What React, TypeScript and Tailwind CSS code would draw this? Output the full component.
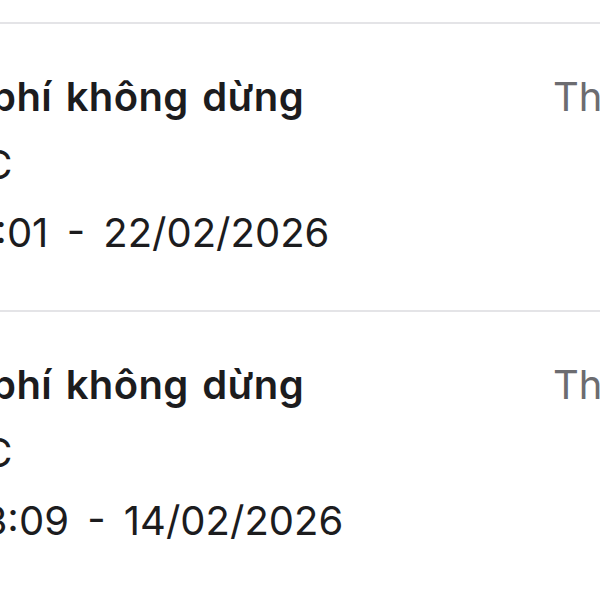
const ROWS = [
  { title: "Thu phí không dừng", sub: "VETC", time: "10:41:01 - 22/02/2026", status: "Thành công" },
  { title: "Thu phí không dừng", sub: "VETC", time: "07:23:09 - 14/02/2026", status: "Thành công" },
];

export default function App() {
  return (
    <div
      className="h-[600px] w-[600px] overflow-hidden bg-white pt-[22px]"
      style={{ fontFamily: "Inter, 'Noto Sans', sans-serif" }}
    >
      {ROWS.map((row, i) => (
        <div
          key={i}
          className="flex border-t-2 border-[#e4e4e7] pt-[39px] pb-[43px] ml-[-99px]"
        >
          <div className="flex-1 text-[40px] leading-[68px] text-[#1c1c1e] whitespace-nowrap">
            <div className="font-semibold tracking-[0.4px] [word-spacing:3px]">{row.title}</div>
            <div className="tracking-[2px]">{row.sub}</div>
            <div className="[word-spacing:7px]">{row.time}</div>
          </div>
          <div className="w-[47px] shrink-0 text-[40px] leading-[68px] text-[#6c6c70] whitespace-nowrap">
            {row.status}
          </div>
        </div>
      ))}
    </div>
  );
}
